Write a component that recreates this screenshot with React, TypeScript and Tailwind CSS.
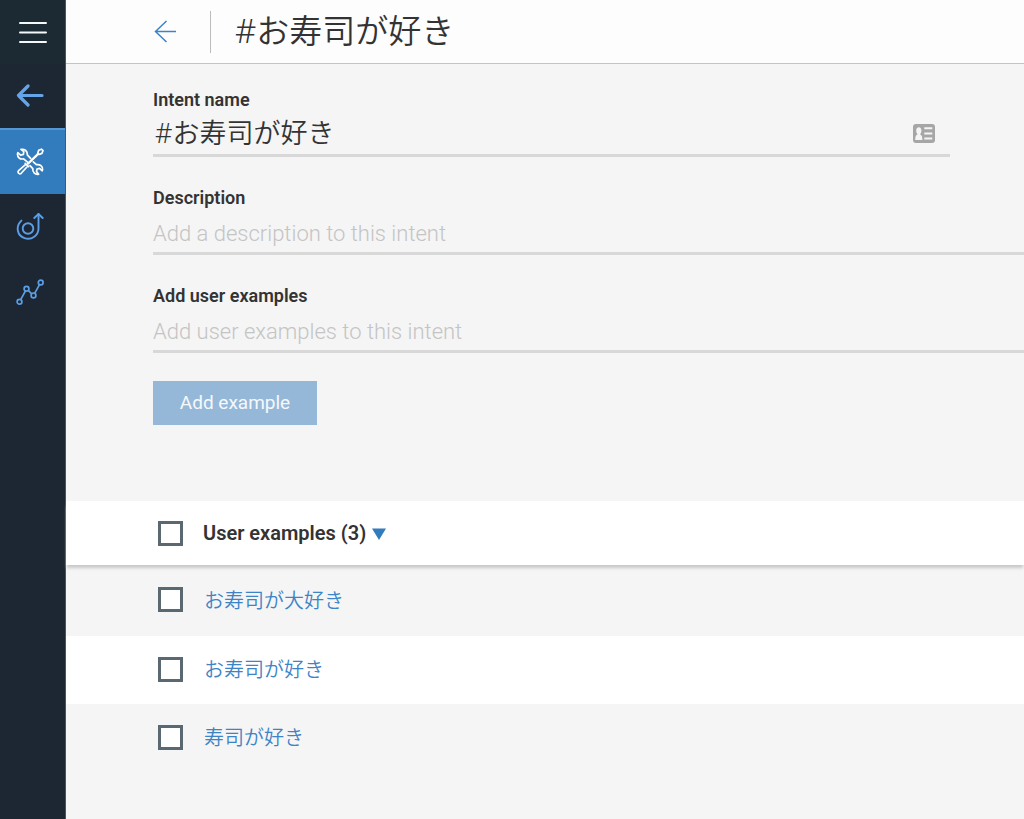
import { useState, type ReactNode } from "react";

const uiFont = "font-['Roboto','Noto_Sans_CJK_JP',sans-serif]";
const jaFont = "font-['Noto_Sans','Noto_Sans_CJK_JP',sans-serif]";

function MenuIcon() {
  return (
    <svg width="28" height="24" viewBox="0 0 28 24" stroke="#f4f8f8" strokeWidth="2" strokeLinecap="round" aria-hidden="true">
      <path d="M1 3h26M1 12.5h26M1 22h26" />
    </svg>
  );
}

function BoldArrowIcon() {
  return (
    <svg width="28" height="24" viewBox="0 0 28 24" fill="none" stroke="#64a5ea" strokeWidth="3.200" strokeLinecap="round" strokeLinejoin="round" aria-hidden="true">
      <path d="M12 2L2.500 11.500L12 21M2.500 11.500H26" />
    </svg>
  );
}

function ToolsIcon() {
  return (
    <svg width="28" height="28" viewBox="0 0 28 28" fill="none" stroke="#fff" strokeWidth="1.700" strokeLinecap="round" strokeLinejoin="round" aria-hidden="true">
      <path d="M11.800 14.400L7.600 10.800C4.200 11.700 1.200 9.400 1.500 5.700L1.800 4.700L4.600 7.200L7.400 6.400L7.800 3.700L5 1.400C8.700.700 11.700 3.200 11.300 6.900L14.600 10.400" />
      <path d="M17.300 13.900L20.400 16.700C23.900 15.900 26.900 18.400 26.600 21.600L26.200 22.800L23.600 20.400L21 21L20.500 23.600L22.700 26.200C19.300 27 16.400 24.500 16.800 20.700L14 17.700" />
      <path d="M12 15.600L22.200 5.900" strokeWidth="2.200" />
      <path d="M21.700 5.200L22.700 2.300L25.400 1.200L27 2.700L25.900 5.400L23 6.500Z" />
      <path d="M9.200 15.300L12.600 18.700M10 16.100L2.600 22.700C.900 24.300 3.500 27 5.200 25.300L11.800 18" />
    </svg>
  );
}

function DeployIcon() {
  return (
    <svg width="28" height="28" viewBox="0 0 28 28" fill="none" stroke="#5b9ee3" strokeWidth="1.900" strokeLinecap="round" strokeLinejoin="round" aria-hidden="true">
      <path d="M5.400 7.600C-.600 13.200.900 22.500 8.500 25.100C15.700 27.600 22.500 22.200 22.500 15.500V1" />
      <path d="M18.300 5L22.500 1L26.700 5" />
      <circle cx="12" cy="15.500" r="5.300" />
    </svg>
  );
}

function AnalyticsIcon() {
  return (
    <svg width="28" height="28" viewBox="0 0 28 28" fill="none" stroke="#5b9ee3" strokeWidth="1.700" aria-hidden="true">
      <circle cx="3.500" cy="22.800" r="2.400" />
      <circle cx="10.500" cy="9.800" r="2.400" />
      <circle cx="17.500" cy="16.400" r="2.400" />
      <circle cx="24.700" cy="3.500" r="2.400" />
      <path d="M4.700 20.700L9.400 12M12.300 11.400L15.700 14.800M18.700 14.300L23.500 5.600" />
    </svg>
  );
}

function ContactCardIcon() {
  return (
    <svg width="22" height="19" viewBox="0 0 22 19" aria-hidden="true">
      <rect width="22" height="19" rx="3" fill="#a6a6a6" />
      <g fill="#f5f5f5">
        <path d="M2.200 16C2.200 12.600 3 11 4.600 10.300C3.700 9.600 3.200 8.300 3.200 6.800C3.200 4.500 4.100 3.300 5.800 3.300S8.400 4.500 8.400 6.800C8.400 8.300 7.900 9.600 7 10.300C8.600 11 9.400 12.600 9.400 16Z" />
        <path d="M11.300 3.300h8v2h-8zM11.300 8.400h8v2h-8zM11.300 13.600h8v2h-8z" />
      </g>
    </svg>
  );
}

function NavItem({ label, active, children }: { label: string; active?: boolean; children: ReactNode }) {
  return (
    <a
      href="#"
      aria-label={label}
      aria-current={active ? "page" : undefined}
      className={
        active
          ? "flex h-[66px] items-center border-t-2 border-[#5596d6] bg-[#327bbc] pl-4"
          : "flex h-[66px] items-center pl-4"
      }
    >
      {children}
    </a>
  );
}

function Field({ id, label, children }: { id: string; label: string; children: ReactNode }) {
  return (
    <div className="flex h-[98px] flex-col">
      <label htmlFor={id} className="text-lg leading-[26px] font-semibold text-[#333]">
        {label}
      </label>
      {children}
    </div>
  );
}

const inputStyle =
  "h-11 w-full border-b-[3px] border-[#d8d8d8] bg-transparent pt-1 text-[22px] font-light text-[#333] outline-none placeholder:text-[#c4c4c4]";

const boxStyle = "size-[25px] shrink-0 appearance-none border-[3px] border-[#5a6872] bg-white checked:bg-[#327bbc]";

const examples = [
  { text: "お寿司が大好き", row: "flex h-[71px] items-center gap-[21px] pl-[92px] pb-0.5" },
  { text: "お寿司が好き", row: "flex h-[68px] items-center gap-[21px] bg-white pl-[92px] pb-0.5" },
  { text: "寿司が好き", row: "flex h-[68px] items-center gap-[21px] pl-[92px] pb-0.5" },
];

export default function App() {
  const [name, setName] = useState("#お寿司が好き");

  return (
    <div className={`flex min-h-screen bg-[#f5f5f5] text-[#333] ${uiFont}`}>
      <nav aria-label="Main" className="w-[66px] shrink-0 border-r border-[#4a5662] bg-[#1d2733]">
        <button type="button" aria-label="Menu" className="flex h-16 w-full items-center justify-center bg-[#1c2a33]">
          <MenuIcon />
        </button>
        <a href="#" aria-label="Back" className="flex h-16 items-center pl-4">
          <BoldArrowIcon />
        </a>
        <NavItem label="Build" active><ToolsIcon /></NavItem>
        <NavItem label="Deploy"><DeployIcon /></NavItem>
        <NavItem label="Analytics"><AnalyticsIcon /></NavItem>
      </nav>

      <main className="min-w-0 flex-1">
        <header className="flex h-16 items-center border-b border-[#c4c4c4] bg-[#fdfdfd] pl-[88px]">
          <a href="#" aria-label="Back to intents">
            <svg width="23" height="23" viewBox="0 0 23 23" fill="none" stroke="#3d84c6" strokeWidth="1.500" aria-hidden="true">
              <path d="M12.500 1L1.500 11.500L12.500 22M1.500 11.500H22" />
            </svg>
          </a>
          <span className="ml-[33px] h-[42px] w-px bg-[#bcbcbc]" />
          <h1 className={`ml-6 pb-0.5 text-[33px] leading-[44px] font-[350] ${jaFont}`}>
            #お寿司が好き
          </h1>
        </header>

        <form className="h-[437px] pt-[23px] pl-[87px]" onSubmit={(e) => e.preventDefault()}>
          <Field id="intent-name" label="Intent name">
            <div className="mr-[74px] flex h-11 items-center border-b-[3px] border-[#d8d8d8]">
              <input
                id="intent-name"
                value={name}
                onChange={(e) => setName(e.target.value)}
                className={`min-w-0 flex-1 bg-transparent pb-0.5 pl-0.5 text-[27px] leading-9 font-[350] outline-none ${jaFont}`}
              />
              <span className="mr-[15px]"><ContactCardIcon /></span>
            </div>
          </Field>
          <Field id="description" label="Description">
            <input id="description" placeholder="Add a description to this intent" className={inputStyle} />
          </Field>
          <Field id="examples" label="Add user examples">
            <input id="examples" placeholder="Add user examples to this intent" className={inputStyle} />
          </Field>
          <button type="submit" className="h-11 w-[164px] bg-[#95b8d9] text-[19px] text-[#f5f8fb]">
            Add example
          </button>
        </form>

        <section aria-label="User examples">
          <div className="relative flex h-16 items-center bg-white pl-[92px] shadow-[0_4px_3px_-1px_#c8c8c8]">
            <input id="all" type="checkbox" className={boxStyle} />
            <label htmlFor="all" className="ml-5 text-xl font-semibold">
              User examples (3)
            </label>
            <button type="button" aria-label="Sort" className="ml-1.5">
              <svg width="14" height="14" viewBox="0 0 14 14" fill="#327bbc" aria-hidden="true">
                <path d="M0 2.500h14L7 14z" />
              </svg>
            </button>
          </div>
          <ul>
            {examples.map((item, i) => (
              <li key={item.text} className={item.row}>
                <input type="checkbox" aria-labelledby={`example-${i}`} className={boxStyle} />
                <a href="#" id={`example-${i}`} className={`pt-0.5 text-xl font-[350] text-[#3d84c6] ${jaFont}`}>
                  {item.text}
                </a>
              </li>
            ))}
          </ul>
        </section>
      </main>
    </div>
  );
}
